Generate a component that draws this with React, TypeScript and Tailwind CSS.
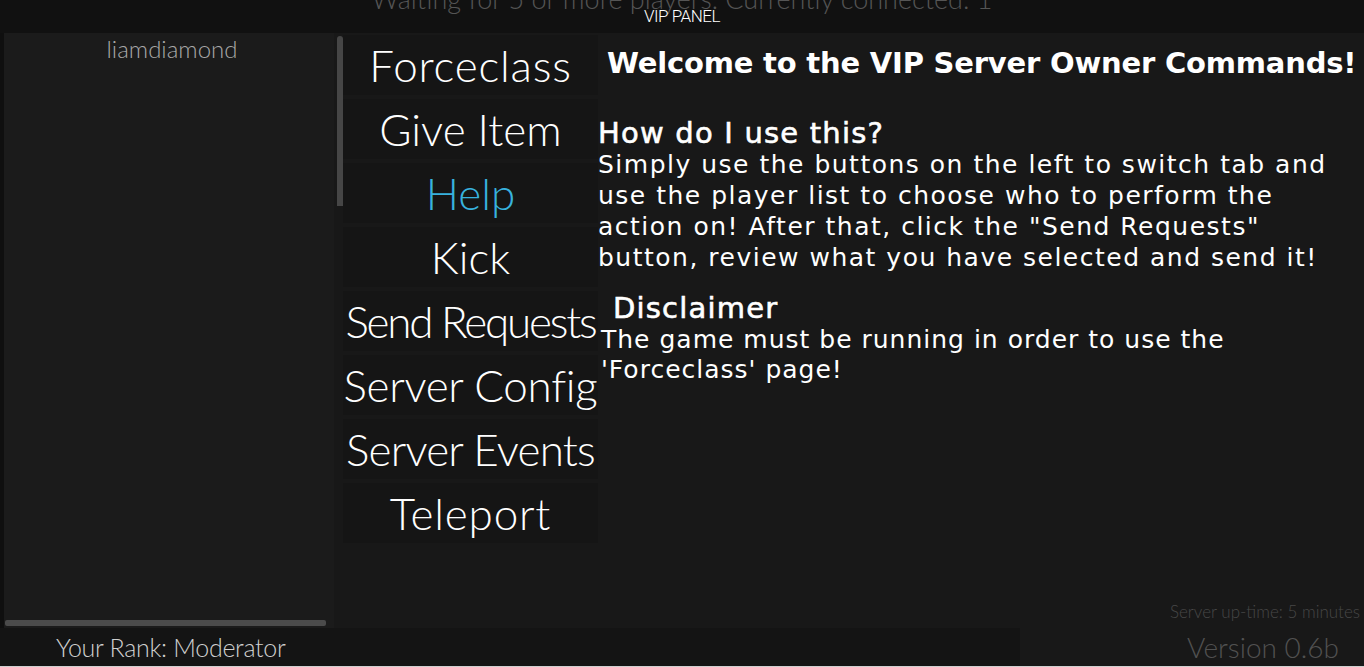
const tabs = [
  { label: 'Forceclass', track: 'tracking-[0.8px]' },
  { label: 'Give Item', track: '' },
  { label: 'Help', track: '' },
  { label: 'Kick', track: '' },
  { label: 'Send Requests', track: 'tracking-[-2.2px]' },
  { label: 'Server Config', track: 'tracking-[-0.3px]' },
  { label: 'Server Events', track: 'tracking-[-0.8px]' },
  { label: 'Teleport', track: 'tracking-[0.8px]' },
];

const light = "font-['Lato',sans-serif] font-light";
const gotham = "font-['DejaVu_Sans',sans-serif]";

export default function App() {
  return (
    <div className="w-[1364px] h-[667px] flex flex-col bg-[#111111] overflow-hidden text-white">
      {/* top band */}
      <div className="h-[33px] shrink-0 grid overflow-hidden">
        <div
          className={`col-start-1 row-start-1 -mt-[19px] text-center text-[27px] leading-[36px] text-[#555555] ${light}`}
        >
          Waiting for 5 or more players. Currently connected: 1
        </div>
        <div className="col-start-1 row-start-1 pt-[6px] text-center text-[17px] leading-[20px] font-['Roboto',sans-serif] font-light tracking-[-0.5px]">
          VIP PANEL
        </div>
      </div>

      {/* middle */}
      <div className="flex-1 flex min-h-0 bg-[#181818]">
        <div className="w-[4px] shrink-0 bg-[#0f0f0f]" />

        {/* player list */}
        <div className="w-[330px] shrink-0 flex flex-col bg-[#1b1b1b]">
          <div className={`pt-[2px] pl-[6px] text-center text-[24px] leading-[28px] text-[#a8a8a8] ${light}`}>
            liamdiamond
          </div>
          <div className="flex-1" />
          <div className="h-[7px] mb-[1px] mx-[1px] flex">
            <div className="w-[321px] h-[6px] rounded-[2px] bg-[#4b4b4b]" />
          </div>
        </div>

        {/* vertical scrollbar */}
        <div className="w-[9px] shrink-0 pl-[3px] pt-[3px]">
          <div className="w-[6px] h-[170px] rounded-t-[3px] bg-[#464646]" />
        </div>

        {/* tab buttons */}
        <div className="w-[255px] shrink-0 flex flex-col gap-[4px] pt-[2px]">
          {tabs.map((t) => (
            <div
              key={t.label}
              className={`h-[60px] flex items-center justify-center bg-[#151515] text-[44px] leading-none whitespace-nowrap ${light} ${t.track} ${
                t.label === 'Help' ? 'text-[#38b2de]' : 'text-white'
              }`}
            >
              {t.label}
            </div>
          ))}
        </div>

        {/* content */}
        <div className={`flex-1 flex flex-col min-w-0 ${gotham}`}>
          <div className="pl-[9px] pt-[13px] text-[29px] leading-[34px] font-bold whitespace-nowrap tracking-[-0.2px]">
            Welcome to the VIP Server Owner Commands!
          </div>
          <div className="pt-[37px] text-[29px] leading-[32px] tracking-[1.2px] [-webkit-text-stroke:0.6px_white]">
            How do I use this?
          </div>
          <div className="text-[25px] leading-[31px] tracking-[1.5px] whitespace-nowrap">
            <div>Simply use the buttons on the left to switch tab and</div>
            <div>use the player list to choose who to perform the</div>
            <div>action on! After that, click the "Send Requests"</div>
            <div>button, review what you have selected and send it!</div>
          </div>
          <div className="pl-[15px] pt-[18px] text-[29px] leading-[34px] tracking-[1.2px] [-webkit-text-stroke:0.6px_white]">
            Disclaimer
          </div>
          <div className="pl-[3px] text-[25px] leading-[30px] tracking-[1px] whitespace-nowrap">
            <div>The game must be running in order to use the</div>
            <div>'Forceclass' page!</div>
          </div>
          <div className="flex-1" />
          <div className={`pr-[4px] pb-[6px] text-right text-[17px] leading-[20px] text-[#474747] ${light}`}>
            Server up-time: 5 minutes
          </div>
        </div>
      </div>

      {/* bottom bar */}
      <div className="h-[39px] shrink-0 flex border-b border-[#cfcfcf]">
        <div className={`w-[1020px] bg-[#141414] pl-[56px] text-[25px] leading-[38px] tracking-[-0.3px] text-[#cfcfcf] ${light}`}>
          Your Rank: Moderator
        </div>
        <div className={`flex-1 bg-[#181818] pr-[25px] text-right text-[28px] leading-[38px] text-[#515151] ${light}`}>
          Version 0.6b
        </div>
      </div>
    </div>
  );
}
